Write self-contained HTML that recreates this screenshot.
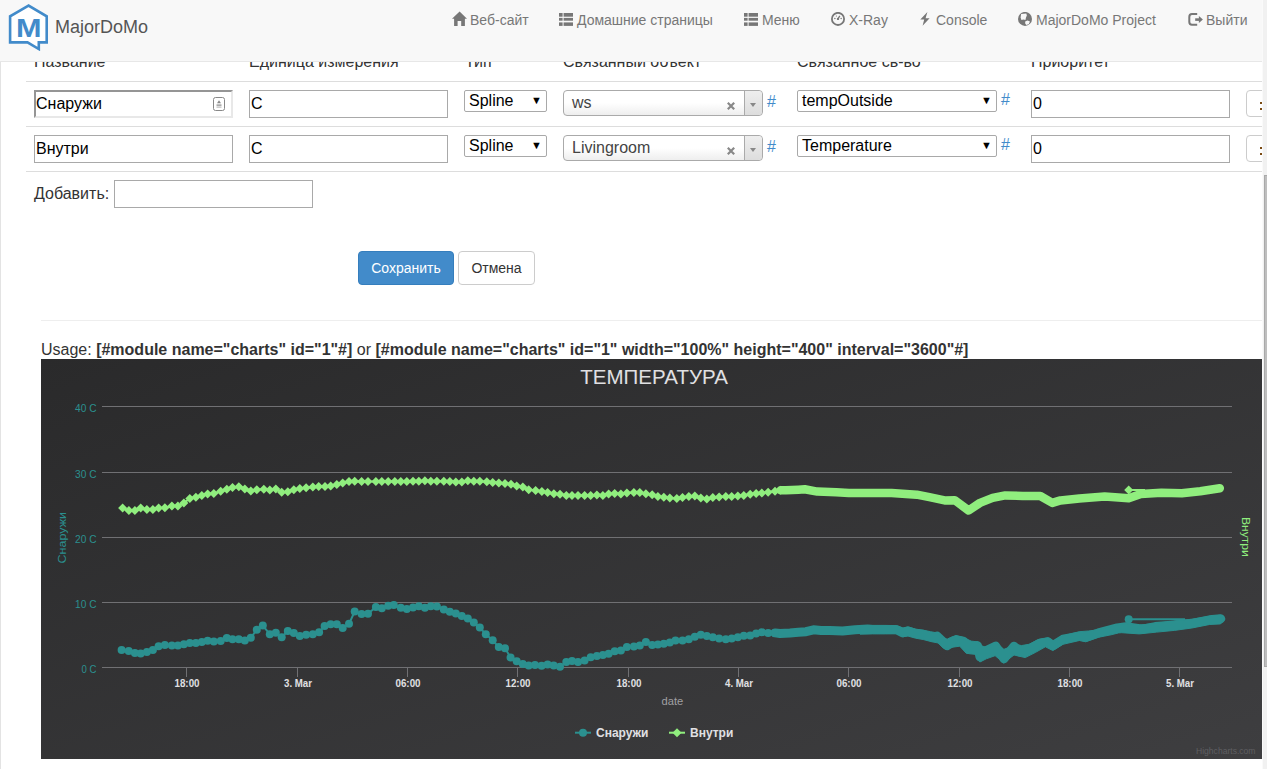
<!DOCTYPE html>
<html><head><meta charset="utf-8"><title>MajorDoMo</title>
<style>
*{box-sizing:border-box}
html,body{margin:0;padding:0;width:1267px;height:769px;overflow:hidden;background:#fff}
body{font-family:"Liberation Sans",sans-serif;color:#333;position:relative}
.a{position:absolute}
.leftline{left:0;top:62px;width:1px;height:707px;background:#e3e3e3}
.hdr{font-size:16px;color:#333;white-space:nowrap;line-height:18px}
.hr{height:1px;background:#ddd}
.inp{background:#fff;border:1px solid #a9a9a9;font-size:16px;color:#000;line-height:26px;padding-left:1px;white-space:nowrap;overflow:hidden}
.sel{background:#fff;border:1px solid #a9a9a9;border-radius:2px;font-size:16px;color:#000;line-height:19px;padding-left:4px;white-space:nowrap}
.sel .arr{position:absolute;right:4px;top:0;font-size:11px;line-height:19px;color:#000}
.s2{border:1px solid #aaa;border-radius:4px;background:linear-gradient(#fff 0%,#fff 50%,#eee 100%);font-size:16px;color:#444;line-height:24px;padding-left:8px;white-space:nowrap}
.s2 .x{position:absolute;left:163px;top:11px;width:8px;height:8px}
.s2 .dd{position:absolute;right:0;top:0;width:18px;height:24px;border-left:1px solid #aaa;border-radius:0 4px 4px 0;background:linear-gradient(#eee,#ddd)}
.s2 .dd:after{content:"";position:absolute;left:5px;top:12px;border-left:3.2px solid transparent;border-right:3.2px solid transparent;border-top:4.6px solid #888}
.hash{font-size:16px;color:#428bca;line-height:18px}
.btnr{border:1px solid #ccc;border-radius:4px;background:#fff}
.nav{top:0;left:0;width:1267px;height:62px;background:#f8f8f8;border-bottom:1px solid #e7e7e7}
.ni{font-size:14px;color:#777;line-height:16px;white-space:nowrap;top:12px}
.ni svg{position:absolute}
</style></head>
<body>
<div class="a leftline"></div>

<!-- table header (partially hidden under navbar) -->
<div class="a hdr" style="left:34px;top:53px">Название</div>
<div class="a hdr" style="left:249px;top:53px">Единица измерения</div>
<div class="a hdr" style="left:465px;top:53px">Тип</div>
<div class="a hdr" style="left:563px;top:53px">Связанный объект</div>
<div class="a hdr" style="left:797px;top:53px">Связанное св-во</div>
<div class="a hdr" style="left:1031px;top:53px">Приоритет</div>

<div class="a hr" style="left:26px;top:81px;width:1236px"></div>
<div class="a hr" style="left:26px;top:126px;width:1236px"></div>
<div class="a hr" style="left:26px;top:171px;width:1236px"></div>

<!-- row 1 -->
<div class="a inp" style="left:34px;top:90px;width:199px;height:28px;border-style:solid;border-width:2px;border-color:#959595 #e8e8e8 #e8e8e8 #959595;padding-left:0;line-height:24px">Снаружи
  <svg class="a" style="left:177px;top:5px" width="12" height="14" viewBox="0 0 12 14"><rect x="0.5" y="0.5" width="11" height="13" rx="2" fill="#fff" stroke="#888"/><path d="M6 3.2L8 6.2H4Z" fill="#888"/><rect x="3.5" y="7.5" width="5" height="1.2" fill="#888"/><rect x="3.5" y="9.5" width="5" height="1.2" fill="#bbb"/></svg>
</div>
<div class="a inp" style="left:249px;top:90px;width:199px;height:28px">C</div>
<div class="a sel" style="left:464px;top:90px;width:83px;height:22px">Spline<span class="arr">▼</span></div>
<div class="a s2" style="left:563px;top:90px;width:200px;height:26px">ws<svg class="x" viewBox="0 0 8 8"><path d="M0.8 0.8L7.2 7.2M7.2 0.8L0.8 7.2" stroke="#888" stroke-width="2.2"/></svg><span class="dd"></span></div>
<div class="a hash" style="left:767px;top:93px">#</div>
<div class="a sel" style="left:797px;top:90px;width:200px;height:22px">tempOutside<span class="arr">▼</span></div>
<div class="a hash" style="left:1001px;top:91px">#</div>
<div class="a inp" style="left:1031px;top:90px;width:199px;height:28px">0</div>
<div class="a btnr" style="left:1246px;top:90px;width:30px;height:27px"></div><div class="a" style="left:1260px;top:102px;width:2px;height:2px;background:#7a4a12"></div><div class="a" style="left:1260px;top:108px;width:2px;height:2px;background:#7a4a12"></div>

<!-- row 2 -->
<div class="a inp" style="left:34px;top:135px;width:199px;height:28px">Внутри</div>
<div class="a inp" style="left:249px;top:135px;width:199px;height:28px">C</div>
<div class="a sel" style="left:464px;top:135px;width:83px;height:22px">Spline<span class="arr">▼</span></div>
<div class="a s2" style="left:563px;top:135px;width:200px;height:26px">Livingroom<svg class="x" viewBox="0 0 8 8"><path d="M0.8 0.8L7.2 7.2M7.2 0.8L0.8 7.2" stroke="#888" stroke-width="2.2"/></svg><span class="dd"></span></div>
<div class="a hash" style="left:767px;top:138px">#</div>
<div class="a sel" style="left:797px;top:135px;width:200px;height:22px">Temperature<span class="arr">▼</span></div>
<div class="a hash" style="left:1001px;top:136px">#</div>
<div class="a inp" style="left:1031px;top:135px;width:199px;height:28px">0</div>
<div class="a btnr" style="left:1246px;top:135px;width:30px;height:27px"></div><div class="a" style="left:1260px;top:147px;width:2px;height:2px;background:#7a4a12"></div><div class="a" style="left:1260px;top:153px;width:2px;height:2px;background:#7a4a12"></div>

<!-- add -->
<div class="a hdr" style="left:34px;top:185px">Добавить:</div>
<div class="a inp" style="left:114px;top:180px;width:199px;height:28px"></div>

<!-- buttons -->
<div class="a" style="left:358px;top:251px;width:96px;height:34px;background:#428bca;border:1px solid #357ebd;border-radius:4px;color:#fff;font-size:14px;line-height:32px;text-align:center">Сохранить</div>
<div class="a" style="left:458px;top:251px;width:77px;height:34px;background:#fff;border:1px solid #ccc;border-radius:4px;color:#333;font-size:14px;line-height:32px;text-align:center">Отмена</div>

<div class="a hr" style="left:41px;top:320px;width:1221px;background:#eee"></div>

<div class="a" style="left:41px;top:341px;font-size:16px;line-height:18px;white-space:nowrap;color:#333">Usage: <b>[#module name="charts" id="1"#]</b> or <b>[#module name="charts" id="1" width="100%" height="400" interval="3600"#]</b></div>

<svg width="1221" height="400" viewBox="41 359 1221 400" style="position:absolute;left:41px;top:359px;display:block">
<defs><linearGradient id="bg" x1="0" y1="0" x2="1" y2="1"><stop offset="0" stop-color="#2a2a2b"/><stop offset="1" stop-color="#3e3e40"/></linearGradient></defs>
<rect x="41" y="359" width="1221" height="400" fill="url(#bg)"/>
<rect x="102" y="406" width="1130" height="1" fill="#707073"/>
<rect x="102" y="472" width="1130" height="1" fill="#707073"/>
<rect x="102" y="537" width="1130" height="1" fill="#707073"/>
<rect x="102" y="602" width="1130" height="1" fill="#707073"/>
<rect x="102" y="667" width="1130" height="1" fill="#707073"/>
<rect x="186" y="667" width="1" height="10" fill="#707073"/>
<rect x="297" y="667" width="1" height="10" fill="#707073"/>
<rect x="407" y="667" width="1" height="10" fill="#707073"/>
<rect x="517" y="667" width="1" height="10" fill="#707073"/>
<rect x="628" y="667" width="1" height="10" fill="#707073"/>
<rect x="738" y="667" width="1" height="10" fill="#707073"/>
<rect x="848" y="667" width="1" height="10" fill="#707073"/>
<rect x="959" y="667" width="1" height="10" fill="#707073"/>
<rect x="1069" y="667" width="1" height="10" fill="#707073"/>
<rect x="1179" y="667" width="1" height="10" fill="#707073"/>
<text x="75.0" y="412.0" textLength="21.5" lengthAdjust="spacingAndGlyphs" font-family="Liberation Sans, sans-serif" font-size="11" fill="#2b908f">40 C</text>
<text x="75.0" y="478.0" textLength="21.5" lengthAdjust="spacingAndGlyphs" font-family="Liberation Sans, sans-serif" font-size="11" fill="#2b908f">30 C</text>
<text x="75.0" y="543.0" textLength="21.5" lengthAdjust="spacingAndGlyphs" font-family="Liberation Sans, sans-serif" font-size="11" fill="#2b908f">20 C</text>
<text x="75.0" y="608.0" textLength="21.5" lengthAdjust="spacingAndGlyphs" font-family="Liberation Sans, sans-serif" font-size="11" fill="#2b908f">10 C</text>
<text x="81.5" y="673.0" textLength="15" lengthAdjust="spacingAndGlyphs" font-family="Liberation Sans, sans-serif" font-size="11" fill="#2b908f">0 C</text>
<text x="174.5" y="686.6" textLength="25" lengthAdjust="spacingAndGlyphs" font-family="Liberation Sans, sans-serif" font-size="10" font-weight="bold" fill="#e0e0e3">18:00</text>
<text x="284.0" y="686.6" textLength="28" lengthAdjust="spacingAndGlyphs" font-family="Liberation Sans, sans-serif" font-size="10" font-weight="bold" fill="#e0e0e3">3. Mar</text>
<text x="395.5" y="686.6" textLength="25" lengthAdjust="spacingAndGlyphs" font-family="Liberation Sans, sans-serif" font-size="10" font-weight="bold" fill="#e0e0e3">06:00</text>
<text x="505.5" y="686.6" textLength="25" lengthAdjust="spacingAndGlyphs" font-family="Liberation Sans, sans-serif" font-size="10" font-weight="bold" fill="#e0e0e3">12:00</text>
<text x="616.5" y="686.6" textLength="25" lengthAdjust="spacingAndGlyphs" font-family="Liberation Sans, sans-serif" font-size="10" font-weight="bold" fill="#e0e0e3">18:00</text>
<text x="725.0" y="686.6" textLength="28" lengthAdjust="spacingAndGlyphs" font-family="Liberation Sans, sans-serif" font-size="10" font-weight="bold" fill="#e0e0e3">4. Mar</text>
<text x="836.5" y="686.6" textLength="25" lengthAdjust="spacingAndGlyphs" font-family="Liberation Sans, sans-serif" font-size="10" font-weight="bold" fill="#e0e0e3">06:00</text>
<text x="947.5" y="686.6" textLength="25" lengthAdjust="spacingAndGlyphs" font-family="Liberation Sans, sans-serif" font-size="10" font-weight="bold" fill="#e0e0e3">12:00</text>
<text x="1057.5" y="686.6" textLength="25" lengthAdjust="spacingAndGlyphs" font-family="Liberation Sans, sans-serif" font-size="10" font-weight="bold" fill="#e0e0e3">18:00</text>
<text x="1166.0" y="686.6" textLength="28" lengthAdjust="spacingAndGlyphs" font-family="Liberation Sans, sans-serif" font-size="10" font-weight="bold" fill="#e0e0e3">5. Mar</text>
<text x="580.3" y="384.2" textLength="147.7" lengthAdjust="spacingAndGlyphs" font-family="Liberation Sans, sans-serif" font-size="20.8" fill="#e0e0e3">ТЕМПЕРАТУРА</text>
<text x="661.5" y="705" textLength="21.7" lengthAdjust="spacingAndGlyphs" font-family="Liberation Sans, sans-serif" font-size="11.5" fill="#a0a0a3">date</text>
<text transform="translate(65.5,537.7) rotate(-90)" x="-25.75" textLength="51.5" lengthAdjust="spacingAndGlyphs" font-family="Liberation Sans, sans-serif" font-size="11.5" fill="#2b908f">Снаружи</text>
<text transform="translate(1242,536.9) rotate(90)" x="-20" textLength="40" lengthAdjust="spacingAndGlyphs" font-family="Liberation Sans, sans-serif" font-size="11.5" fill="#90ee7e">Внутри</text>
<polyline points="775.0,632.9 780.0,633.5 790.0,633.0 798.4,632.3 806.0,631.7 813.5,629.8 821.1,630.4 830.0,630.4 842.6,631.0 855.2,629.8 867.8,629.1 872.6,629.4 885.3,629.4 896.6,629.8 902.9,632.9 908.0,631.0 915.6,633.6 923.1,634.2 932.0,637.3 937.0,636.1 947.1,645.6 956.0,639.9 963.5,641.1 968.6,649.3 977.4,645.6 980.0,657.0 986.3,650.6 995.7,646.2 1004.0,658.8 1014.0,646.2 1019.0,651.9 1025.2,651.9 1039.0,643.7 1047.9,641.8 1052.9,645.6 1063.0,639.2 1079.4,636.1 1085.8,637.3 1098.4,632.9 1117.3,627.9 1126.2,626.6 1142.6,629.1 1155.2,626.6 1174.4,625.1 1191.9,623.3 1209.5,619.8 1220.6,618.7" fill="none" stroke="#2b908f" stroke-width="9" stroke-linejoin="round" stroke-linecap="round"/>
<polygon points="860.0,625.7 872.6,625.4 885.3,625.4 896.6,625.6 902.9,627.9 908.0,626.9 915.6,629.1 923.1,630.2 930.7,631.7 937.0,632.9 942.1,637.3 947.1,639.2 950.9,637.3 956.0,635.5 961.0,636.7 964.8,638.0 971.1,641.1 977.4,641.8 981.2,645.6 986.3,647.4 992.6,644.3 995.7,642.8 1000.2,646.2 1003.9,649.3 1009.0,647.4 1014.0,643.7 1021.4,645.6 1028.9,644.3 1039.0,639.2 1047.9,637.7 1053.6,641.1 1063.0,636.1 1069.3,634.2 1079.4,631.7 1088.3,631.0 1098.4,629.8 1117.3,625.6 1121.7,624.5 1139.3,625.1 1156.8,623.3 1174.4,621.0 1191.9,619.3 1209.5,616.3 1220.6,615.2 1224.7,618.1 1224.7,619.8 1220.6,623.9 1209.5,624.5 1191.9,628.0 1174.4,630.4 1156.8,632.1 1139.3,633.9 1121.7,632.7 1118.6,632.9 1111.0,634.8 1098.4,637.3 1085.8,641.8 1079.4,640.5 1063.0,644.3 1052.9,650.6 1045.4,646.8 1035.3,652.5 1025.2,657.6 1014.0,655.0 1009.0,658.8 1003.9,663.2 998.9,658.8 995.1,655.7 986.3,658.8 979.9,662.0 976.2,654.4 969.8,653.8 966.1,653.1 959.7,646.2 950.9,647.4 947.1,649.3 943.3,648.1 938.3,643.0 932.0,641.8 923.1,639.5 915.6,638.2 908.0,636.1 902.9,636.7 896.6,633.6 885.3,633.9 872.6,633.9 860.0,634.2" fill="#2b908f" stroke="#2b908f" stroke-width="1" stroke-linejoin="round"/>
<polyline points="121.6,650.0 128.7,651.0 134.9,653.1 140.7,653.4 146.9,651.9 152.9,650.0 158.6,646.2 164.9,645.0 171.9,645.6 177.9,645.6 183.9,644.3 189.8,643.0 195.9,643.0 201.8,642.0 207.6,640.8 213.8,641.5 220.7,640.9 226.8,638.0 232.5,639.2 238.8,639.2 244.8,640.5 250.8,637.7 256.8,629.8 262.8,625.6 269.8,634.2 275.8,632.7 281.7,637.3 287.8,631.0 293.8,632.9 299.8,636.1 306.1,634.8 312.8,634.2 319.1,632.3 324.6,626.0 330.7,624.3 336.8,624.3 342.7,628.1 349.0,623.8 354.7,611.5 361.6,614.0 368.0,613.7 375.9,607.0 381.8,608.3 388.2,605.8 393.8,604.9 400.8,607.7 406.8,608.9 413.0,607.4 418.8,606.2 424.9,607.7 430.8,606.2 436.9,606.4 443.8,609.6 449.8,611.7 455.8,613.4 461.8,615.9 467.8,618.4 473.8,622.6 479.8,627.6 485.8,634.2 492.7,640.3 498.8,647.1 505.0,648.3 510.6,657.5 516.7,661.3 522.8,663.9 528.7,665.5 535.0,665.1 541.6,665.8 547.6,664.5 553.7,665.5 560.0,666.8 566.3,662.0 572.0,661.0 578.0,662.0 584.6,660.5 590.7,657.2 596.9,655.9 602.9,655.0 608.6,653.8 614.7,651.2 620.9,650.4 626.9,647.1 633.9,646.6 639.8,645.6 645.9,642.0 652.2,644.9 657.9,644.5 663.8,643.7 669.8,642.4 675.5,640.5 682.5,640.5 688.8,639.2 694.8,636.7 700.8,634.8 706.8,636.1 712.8,637.3 719.1,638.6 725.8,639.2 731.7,638.6 737.8,637.3 743.8,635.7 750.2,635.5 756.1,633.6 761.8,632.3 768.1,632.9 775.0,632.9" fill="none" stroke="#2b908f" stroke-width="2" stroke-linejoin="round"/>
<circle cx="121.6" cy="650.0" r="4" fill="#2b908f"/>
<circle cx="128.7" cy="651.0" r="4" fill="#2b908f"/>
<circle cx="134.9" cy="653.1" r="4" fill="#2b908f"/>
<circle cx="140.7" cy="653.4" r="4" fill="#2b908f"/>
<circle cx="146.9" cy="651.9" r="4" fill="#2b908f"/>
<circle cx="152.9" cy="650.0" r="4" fill="#2b908f"/>
<circle cx="158.6" cy="646.2" r="4" fill="#2b908f"/>
<circle cx="164.9" cy="645.0" r="4" fill="#2b908f"/>
<circle cx="171.9" cy="645.6" r="4" fill="#2b908f"/>
<circle cx="177.9" cy="645.6" r="4" fill="#2b908f"/>
<circle cx="183.9" cy="644.3" r="4" fill="#2b908f"/>
<circle cx="189.8" cy="643.0" r="4" fill="#2b908f"/>
<circle cx="195.9" cy="643.0" r="4" fill="#2b908f"/>
<circle cx="201.8" cy="642.0" r="4" fill="#2b908f"/>
<circle cx="207.6" cy="640.8" r="4" fill="#2b908f"/>
<circle cx="213.8" cy="641.5" r="4" fill="#2b908f"/>
<circle cx="220.7" cy="640.9" r="4" fill="#2b908f"/>
<circle cx="226.8" cy="638.0" r="4" fill="#2b908f"/>
<circle cx="232.5" cy="639.2" r="4" fill="#2b908f"/>
<circle cx="238.8" cy="639.2" r="4" fill="#2b908f"/>
<circle cx="244.8" cy="640.5" r="4" fill="#2b908f"/>
<circle cx="250.8" cy="637.7" r="4" fill="#2b908f"/>
<circle cx="256.8" cy="629.8" r="4" fill="#2b908f"/>
<circle cx="262.8" cy="625.6" r="4" fill="#2b908f"/>
<circle cx="269.8" cy="634.2" r="4" fill="#2b908f"/>
<circle cx="275.8" cy="632.7" r="4" fill="#2b908f"/>
<circle cx="281.7" cy="637.3" r="4" fill="#2b908f"/>
<circle cx="287.8" cy="631.0" r="4" fill="#2b908f"/>
<circle cx="293.8" cy="632.9" r="4" fill="#2b908f"/>
<circle cx="299.8" cy="636.1" r="4" fill="#2b908f"/>
<circle cx="306.1" cy="634.8" r="4" fill="#2b908f"/>
<circle cx="312.8" cy="634.2" r="4" fill="#2b908f"/>
<circle cx="319.1" cy="632.3" r="4" fill="#2b908f"/>
<circle cx="324.6" cy="626.0" r="4" fill="#2b908f"/>
<circle cx="330.7" cy="624.3" r="4" fill="#2b908f"/>
<circle cx="336.8" cy="624.3" r="4" fill="#2b908f"/>
<circle cx="342.7" cy="628.1" r="4" fill="#2b908f"/>
<circle cx="349.0" cy="623.8" r="4" fill="#2b908f"/>
<circle cx="354.7" cy="611.5" r="4" fill="#2b908f"/>
<circle cx="361.6" cy="614.0" r="4" fill="#2b908f"/>
<circle cx="368.0" cy="613.7" r="4" fill="#2b908f"/>
<circle cx="375.9" cy="607.0" r="4" fill="#2b908f"/>
<circle cx="381.8" cy="608.3" r="4" fill="#2b908f"/>
<circle cx="388.2" cy="605.8" r="4" fill="#2b908f"/>
<circle cx="393.8" cy="604.9" r="4" fill="#2b908f"/>
<circle cx="400.8" cy="607.7" r="4" fill="#2b908f"/>
<circle cx="406.8" cy="608.9" r="4" fill="#2b908f"/>
<circle cx="413.0" cy="607.4" r="4" fill="#2b908f"/>
<circle cx="418.8" cy="606.2" r="4" fill="#2b908f"/>
<circle cx="424.9" cy="607.7" r="4" fill="#2b908f"/>
<circle cx="430.8" cy="606.2" r="4" fill="#2b908f"/>
<circle cx="436.9" cy="606.4" r="4" fill="#2b908f"/>
<circle cx="443.8" cy="609.6" r="4" fill="#2b908f"/>
<circle cx="449.8" cy="611.7" r="4" fill="#2b908f"/>
<circle cx="455.8" cy="613.4" r="4" fill="#2b908f"/>
<circle cx="461.8" cy="615.9" r="4" fill="#2b908f"/>
<circle cx="467.8" cy="618.4" r="4" fill="#2b908f"/>
<circle cx="473.8" cy="622.6" r="4" fill="#2b908f"/>
<circle cx="479.8" cy="627.6" r="4" fill="#2b908f"/>
<circle cx="485.8" cy="634.2" r="4" fill="#2b908f"/>
<circle cx="492.7" cy="640.3" r="4" fill="#2b908f"/>
<circle cx="498.8" cy="647.1" r="4" fill="#2b908f"/>
<circle cx="505.0" cy="648.3" r="4" fill="#2b908f"/>
<circle cx="510.6" cy="657.5" r="4" fill="#2b908f"/>
<circle cx="516.7" cy="661.3" r="4" fill="#2b908f"/>
<circle cx="522.8" cy="663.9" r="4" fill="#2b908f"/>
<circle cx="528.7" cy="665.5" r="4" fill="#2b908f"/>
<circle cx="535.0" cy="665.1" r="4" fill="#2b908f"/>
<circle cx="541.6" cy="665.8" r="4" fill="#2b908f"/>
<circle cx="547.6" cy="664.5" r="4" fill="#2b908f"/>
<circle cx="553.7" cy="665.5" r="4" fill="#2b908f"/>
<circle cx="560.0" cy="666.8" r="4" fill="#2b908f"/>
<circle cx="566.3" cy="662.0" r="4" fill="#2b908f"/>
<circle cx="572.0" cy="661.0" r="4" fill="#2b908f"/>
<circle cx="578.0" cy="662.0" r="4" fill="#2b908f"/>
<circle cx="584.6" cy="660.5" r="4" fill="#2b908f"/>
<circle cx="590.7" cy="657.2" r="4" fill="#2b908f"/>
<circle cx="596.9" cy="655.9" r="4" fill="#2b908f"/>
<circle cx="602.9" cy="655.0" r="4" fill="#2b908f"/>
<circle cx="608.6" cy="653.8" r="4" fill="#2b908f"/>
<circle cx="614.7" cy="651.2" r="4" fill="#2b908f"/>
<circle cx="620.9" cy="650.4" r="4" fill="#2b908f"/>
<circle cx="626.9" cy="647.1" r="4" fill="#2b908f"/>
<circle cx="633.9" cy="646.6" r="4" fill="#2b908f"/>
<circle cx="639.8" cy="645.6" r="4" fill="#2b908f"/>
<circle cx="645.9" cy="642.0" r="4" fill="#2b908f"/>
<circle cx="652.2" cy="644.9" r="4" fill="#2b908f"/>
<circle cx="657.9" cy="644.5" r="4" fill="#2b908f"/>
<circle cx="663.8" cy="643.7" r="4" fill="#2b908f"/>
<circle cx="669.8" cy="642.4" r="4" fill="#2b908f"/>
<circle cx="675.5" cy="640.5" r="4" fill="#2b908f"/>
<circle cx="682.5" cy="640.5" r="4" fill="#2b908f"/>
<circle cx="688.8" cy="639.2" r="4" fill="#2b908f"/>
<circle cx="694.8" cy="636.7" r="4" fill="#2b908f"/>
<circle cx="700.8" cy="634.8" r="4" fill="#2b908f"/>
<circle cx="706.8" cy="636.1" r="4" fill="#2b908f"/>
<circle cx="712.8" cy="637.3" r="4" fill="#2b908f"/>
<circle cx="719.1" cy="638.6" r="4" fill="#2b908f"/>
<circle cx="725.8" cy="639.2" r="4" fill="#2b908f"/>
<circle cx="731.7" cy="638.6" r="4" fill="#2b908f"/>
<circle cx="737.8" cy="637.3" r="4" fill="#2b908f"/>
<circle cx="743.8" cy="635.7" r="4" fill="#2b908f"/>
<circle cx="750.2" cy="635.5" r="4" fill="#2b908f"/>
<circle cx="756.1" cy="633.6" r="4" fill="#2b908f"/>
<circle cx="761.8" cy="632.3" r="4" fill="#2b908f"/>
<circle cx="768.1" cy="632.9" r="4" fill="#2b908f"/>
<circle cx="775.0" cy="632.9" r="4" fill="#2b908f"/>
<polyline points="1128.7,619.3 1185,619.3" fill="none" stroke="#2b908f" stroke-width="2"/>
<circle cx="1128.7" cy="619.3" r="4" fill="#2b908f"/>
<polyline points="780.7,490.3 785.8,490.3 798.4,489.7 804.7,489.3 817.3,491.6 836.3,492.2 848.9,493.1 870.0,493.1 891.6,493.1 916.8,494.7 929.4,497.2 944.6,500.4 954.7,500.2 968.6,510.5 980.0,502.9 992.6,497.9 1005.2,495.4 1022.6,496.0 1040.3,496.0 1052.3,502.9 1060.5,500.4 1079.4,498.5 1104.7,496.6 1128.7,498.2 1140.8,493.9 1161.3,492.8 1181.8,493.3 1200.3,491.3 1219.8,488.2" fill="none" stroke="#90ee7e" stroke-width="8.5" stroke-linejoin="round" stroke-linecap="round"/>
<polyline points="122.6,508.0 128.9,510.5 134.9,510.5 140.7,508.0 146.9,509.6 152.9,509.6 158.6,508.0 164.9,507.7 171.9,506.1 177.9,506.1 183.9,502.9 189.8,498.5 195.9,497.2 201.8,495.4 207.6,494.1 213.8,493.5 220.7,491.3 226.8,489.3 232.5,487.5 238.8,486.8 244.8,489.0 250.8,490.9 256.8,489.7 263.8,489.2 269.8,490.0 275.8,489.0 281.7,492.2 287.8,491.8 293.8,489.7 299.8,488.4 306.1,487.8 312.8,487.1 318.7,486.5 325.0,486.5 330.7,485.9 336.8,484.6 342.7,483.0 349.0,481.5 354.7,481.2 361.6,481.5 368.0,481.5 375.9,481.5 381.8,481.5 388.2,481.5 394.8,481.5 400.8,481.5 406.8,481.5 413.0,481.3 418.8,481.2 424.9,480.8 430.8,481.2 436.9,481.2 443.8,481.2 449.8,481.5 455.8,482.1 461.8,482.1 467.8,480.8 473.8,481.2 479.8,481.2 486.8,481.7 492.7,482.5 498.8,483.0 505.0,483.4 511.0,484.2 516.7,485.9 522.8,487.1 528.7,489.7 535.6,490.6 541.9,491.6 547.6,492.6 553.9,493.8 560.0,494.3 566.3,495.4 572.0,495.4 578.0,495.6 584.6,495.6 590.7,495.6 596.9,495.1 602.9,495.4 608.6,494.1 614.7,493.5 620.9,494.1 626.9,493.1 633.9,492.6 639.8,492.6 645.9,493.8 652.2,494.7 657.9,496.6 663.8,497.2 669.8,498.1 676.8,498.5 682.5,497.6 688.8,496.6 694.8,496.0 700.8,497.9 706.8,499.1 712.8,497.6 719.1,496.9 725.8,496.6 731.7,496.4 737.8,496.0 743.8,495.6 750.2,494.3 756.1,493.5 761.8,493.1 768.1,492.2 775.0,491.3 780.7,490.3" fill="none" stroke="#90ee7e" stroke-width="2" stroke-linejoin="round"/>
<path d="M122.6 503.5L127.1 508.0L122.6 512.5L118.1 508.0Z" fill="#90ee7e"/>
<path d="M128.9 506.0L133.4 510.5L128.9 515.0L124.4 510.5Z" fill="#90ee7e"/>
<path d="M134.9 506.0L139.4 510.5L134.9 515.0L130.4 510.5Z" fill="#90ee7e"/>
<path d="M140.7 503.5L145.2 508.0L140.7 512.5L136.2 508.0Z" fill="#90ee7e"/>
<path d="M146.9 505.1L151.4 509.6L146.9 514.1L142.4 509.6Z" fill="#90ee7e"/>
<path d="M152.9 505.1L157.4 509.6L152.9 514.1L148.4 509.6Z" fill="#90ee7e"/>
<path d="M158.6 503.5L163.1 508.0L158.6 512.5L154.1 508.0Z" fill="#90ee7e"/>
<path d="M164.9 503.2L169.4 507.7L164.9 512.2L160.4 507.7Z" fill="#90ee7e"/>
<path d="M171.9 501.6L176.4 506.1L171.9 510.6L167.4 506.1Z" fill="#90ee7e"/>
<path d="M177.9 501.6L182.4 506.1L177.9 510.6L173.4 506.1Z" fill="#90ee7e"/>
<path d="M183.9 498.4L188.4 502.9L183.9 507.4L179.4 502.9Z" fill="#90ee7e"/>
<path d="M189.8 494.0L194.3 498.5L189.8 503.0L185.3 498.5Z" fill="#90ee7e"/>
<path d="M195.9 492.7L200.4 497.2L195.9 501.7L191.4 497.2Z" fill="#90ee7e"/>
<path d="M201.8 490.9L206.3 495.4L201.8 499.9L197.3 495.4Z" fill="#90ee7e"/>
<path d="M207.6 489.6L212.1 494.1L207.6 498.6L203.1 494.1Z" fill="#90ee7e"/>
<path d="M213.8 489.0L218.3 493.5L213.8 498.0L209.3 493.5Z" fill="#90ee7e"/>
<path d="M220.7 486.8L225.2 491.3L220.7 495.8L216.2 491.3Z" fill="#90ee7e"/>
<path d="M226.8 484.8L231.3 489.3L226.8 493.8L222.3 489.3Z" fill="#90ee7e"/>
<path d="M232.5 483.0L237.0 487.5L232.5 492.0L228.0 487.5Z" fill="#90ee7e"/>
<path d="M238.8 482.3L243.3 486.8L238.8 491.3L234.3 486.8Z" fill="#90ee7e"/>
<path d="M244.8 484.5L249.3 489.0L244.8 493.5L240.3 489.0Z" fill="#90ee7e"/>
<path d="M250.8 486.4L255.3 490.9L250.8 495.4L246.3 490.9Z" fill="#90ee7e"/>
<path d="M256.8 485.2L261.3 489.7L256.8 494.2L252.3 489.7Z" fill="#90ee7e"/>
<path d="M263.8 484.7L268.3 489.2L263.8 493.7L259.3 489.2Z" fill="#90ee7e"/>
<path d="M269.8 485.5L274.3 490.0L269.8 494.5L265.3 490.0Z" fill="#90ee7e"/>
<path d="M275.8 484.5L280.3 489.0L275.8 493.5L271.3 489.0Z" fill="#90ee7e"/>
<path d="M281.7 487.7L286.2 492.2L281.7 496.7L277.2 492.2Z" fill="#90ee7e"/>
<path d="M287.8 487.3L292.3 491.8L287.8 496.3L283.3 491.8Z" fill="#90ee7e"/>
<path d="M293.8 485.2L298.3 489.7L293.8 494.2L289.3 489.7Z" fill="#90ee7e"/>
<path d="M299.8 483.9L304.3 488.4L299.8 492.9L295.3 488.4Z" fill="#90ee7e"/>
<path d="M306.1 483.3L310.6 487.8L306.1 492.3L301.6 487.8Z" fill="#90ee7e"/>
<path d="M312.8 482.6L317.3 487.1L312.8 491.6L308.3 487.1Z" fill="#90ee7e"/>
<path d="M318.7 482.0L323.2 486.5L318.7 491.0L314.2 486.5Z" fill="#90ee7e"/>
<path d="M325.0 482.0L329.5 486.5L325.0 491.0L320.5 486.5Z" fill="#90ee7e"/>
<path d="M330.7 481.4L335.2 485.9L330.7 490.4L326.2 485.9Z" fill="#90ee7e"/>
<path d="M336.8 480.1L341.3 484.6L336.8 489.1L332.3 484.6Z" fill="#90ee7e"/>
<path d="M342.7 478.5L347.2 483.0L342.7 487.5L338.2 483.0Z" fill="#90ee7e"/>
<path d="M349.0 477.0L353.5 481.5L349.0 486.0L344.5 481.5Z" fill="#90ee7e"/>
<path d="M354.7 476.7L359.2 481.2L354.7 485.7L350.2 481.2Z" fill="#90ee7e"/>
<path d="M361.6 477.0L366.1 481.5L361.6 486.0L357.1 481.5Z" fill="#90ee7e"/>
<path d="M368.0 477.0L372.5 481.5L368.0 486.0L363.5 481.5Z" fill="#90ee7e"/>
<path d="M375.9 477.0L380.4 481.5L375.9 486.0L371.4 481.5Z" fill="#90ee7e"/>
<path d="M381.8 477.0L386.3 481.5L381.8 486.0L377.3 481.5Z" fill="#90ee7e"/>
<path d="M388.2 477.0L392.7 481.5L388.2 486.0L383.7 481.5Z" fill="#90ee7e"/>
<path d="M394.8 477.0L399.3 481.5L394.8 486.0L390.3 481.5Z" fill="#90ee7e"/>
<path d="M400.8 477.0L405.3 481.5L400.8 486.0L396.3 481.5Z" fill="#90ee7e"/>
<path d="M406.8 477.0L411.3 481.5L406.8 486.0L402.3 481.5Z" fill="#90ee7e"/>
<path d="M413.0 476.8L417.5 481.3L413.0 485.8L408.5 481.3Z" fill="#90ee7e"/>
<path d="M418.8 476.7L423.3 481.2L418.8 485.7L414.3 481.2Z" fill="#90ee7e"/>
<path d="M424.9 476.3L429.4 480.8L424.9 485.3L420.4 480.8Z" fill="#90ee7e"/>
<path d="M430.8 476.7L435.3 481.2L430.8 485.7L426.3 481.2Z" fill="#90ee7e"/>
<path d="M436.9 476.7L441.4 481.2L436.9 485.7L432.4 481.2Z" fill="#90ee7e"/>
<path d="M443.8 476.7L448.3 481.2L443.8 485.7L439.3 481.2Z" fill="#90ee7e"/>
<path d="M449.8 477.0L454.3 481.5L449.8 486.0L445.3 481.5Z" fill="#90ee7e"/>
<path d="M455.8 477.6L460.3 482.1L455.8 486.6L451.3 482.1Z" fill="#90ee7e"/>
<path d="M461.8 477.6L466.3 482.1L461.8 486.6L457.3 482.1Z" fill="#90ee7e"/>
<path d="M467.8 476.3L472.3 480.8L467.8 485.3L463.3 480.8Z" fill="#90ee7e"/>
<path d="M473.8 476.7L478.3 481.2L473.8 485.7L469.3 481.2Z" fill="#90ee7e"/>
<path d="M479.8 476.7L484.3 481.2L479.8 485.7L475.3 481.2Z" fill="#90ee7e"/>
<path d="M486.8 477.2L491.3 481.7L486.8 486.2L482.3 481.7Z" fill="#90ee7e"/>
<path d="M492.7 478.0L497.2 482.5L492.7 487.0L488.2 482.5Z" fill="#90ee7e"/>
<path d="M498.8 478.5L503.3 483.0L498.8 487.5L494.3 483.0Z" fill="#90ee7e"/>
<path d="M505.0 478.9L509.5 483.4L505.0 487.9L500.5 483.4Z" fill="#90ee7e"/>
<path d="M511.0 479.7L515.5 484.2L511.0 488.7L506.5 484.2Z" fill="#90ee7e"/>
<path d="M516.7 481.4L521.2 485.9L516.7 490.4L512.2 485.9Z" fill="#90ee7e"/>
<path d="M522.8 482.6L527.3 487.1L522.8 491.6L518.3 487.1Z" fill="#90ee7e"/>
<path d="M528.7 485.2L533.2 489.7L528.7 494.2L524.2 489.7Z" fill="#90ee7e"/>
<path d="M535.6 486.1L540.1 490.6L535.6 495.1L531.1 490.6Z" fill="#90ee7e"/>
<path d="M541.9 487.1L546.4 491.6L541.9 496.1L537.4 491.6Z" fill="#90ee7e"/>
<path d="M547.6 488.1L552.1 492.6L547.6 497.1L543.1 492.6Z" fill="#90ee7e"/>
<path d="M553.9 489.3L558.4 493.8L553.9 498.3L549.4 493.8Z" fill="#90ee7e"/>
<path d="M560.0 489.8L564.5 494.3L560.0 498.8L555.5 494.3Z" fill="#90ee7e"/>
<path d="M566.3 490.9L570.8 495.4L566.3 499.9L561.8 495.4Z" fill="#90ee7e"/>
<path d="M572.0 490.9L576.5 495.4L572.0 499.9L567.5 495.4Z" fill="#90ee7e"/>
<path d="M578.0 491.1L582.5 495.6L578.0 500.1L573.5 495.6Z" fill="#90ee7e"/>
<path d="M584.6 491.1L589.1 495.6L584.6 500.1L580.1 495.6Z" fill="#90ee7e"/>
<path d="M590.7 491.1L595.2 495.6L590.7 500.1L586.2 495.6Z" fill="#90ee7e"/>
<path d="M596.9 490.6L601.4 495.1L596.9 499.6L592.4 495.1Z" fill="#90ee7e"/>
<path d="M602.9 490.9L607.4 495.4L602.9 499.9L598.4 495.4Z" fill="#90ee7e"/>
<path d="M608.6 489.6L613.1 494.1L608.6 498.6L604.1 494.1Z" fill="#90ee7e"/>
<path d="M614.7 489.0L619.2 493.5L614.7 498.0L610.2 493.5Z" fill="#90ee7e"/>
<path d="M620.9 489.6L625.4 494.1L620.9 498.6L616.4 494.1Z" fill="#90ee7e"/>
<path d="M626.9 488.6L631.4 493.1L626.9 497.6L622.4 493.1Z" fill="#90ee7e"/>
<path d="M633.9 488.1L638.4 492.6L633.9 497.1L629.4 492.6Z" fill="#90ee7e"/>
<path d="M639.8 488.1L644.3 492.6L639.8 497.1L635.3 492.6Z" fill="#90ee7e"/>
<path d="M645.9 489.3L650.4 493.8L645.9 498.3L641.4 493.8Z" fill="#90ee7e"/>
<path d="M652.2 490.2L656.7 494.7L652.2 499.2L647.7 494.7Z" fill="#90ee7e"/>
<path d="M657.9 492.1L662.4 496.6L657.9 501.1L653.4 496.6Z" fill="#90ee7e"/>
<path d="M663.8 492.7L668.3 497.2L663.8 501.7L659.3 497.2Z" fill="#90ee7e"/>
<path d="M669.8 493.6L674.3 498.1L669.8 502.6L665.3 498.1Z" fill="#90ee7e"/>
<path d="M676.8 494.0L681.3 498.5L676.8 503.0L672.3 498.5Z" fill="#90ee7e"/>
<path d="M682.5 493.1L687.0 497.6L682.5 502.1L678.0 497.6Z" fill="#90ee7e"/>
<path d="M688.8 492.1L693.3 496.6L688.8 501.1L684.3 496.6Z" fill="#90ee7e"/>
<path d="M694.8 491.5L699.3 496.0L694.8 500.5L690.3 496.0Z" fill="#90ee7e"/>
<path d="M700.8 493.4L705.3 497.9L700.8 502.4L696.3 497.9Z" fill="#90ee7e"/>
<path d="M706.8 494.6L711.3 499.1L706.8 503.6L702.3 499.1Z" fill="#90ee7e"/>
<path d="M712.8 493.1L717.3 497.6L712.8 502.1L708.3 497.6Z" fill="#90ee7e"/>
<path d="M719.1 492.4L723.6 496.9L719.1 501.4L714.6 496.9Z" fill="#90ee7e"/>
<path d="M725.8 492.1L730.3 496.6L725.8 501.1L721.3 496.6Z" fill="#90ee7e"/>
<path d="M731.7 491.9L736.2 496.4L731.7 500.9L727.2 496.4Z" fill="#90ee7e"/>
<path d="M737.8 491.5L742.3 496.0L737.8 500.5L733.3 496.0Z" fill="#90ee7e"/>
<path d="M743.8 491.1L748.3 495.6L743.8 500.1L739.3 495.6Z" fill="#90ee7e"/>
<path d="M750.2 489.8L754.7 494.3L750.2 498.8L745.7 494.3Z" fill="#90ee7e"/>
<path d="M756.1 489.0L760.6 493.5L756.1 498.0L751.6 493.5Z" fill="#90ee7e"/>
<path d="M761.8 488.6L766.3 493.1L761.8 497.6L757.3 493.1Z" fill="#90ee7e"/>
<path d="M768.1 487.7L772.6 492.2L768.1 496.7L763.6 492.2Z" fill="#90ee7e"/>
<path d="M775.0 486.8L779.5 491.3L775.0 495.8L770.5 491.3Z" fill="#90ee7e"/>
<path d="M780.7 485.8L785.2 490.3L780.7 494.8L776.2 490.3Z" fill="#90ee7e"/>
<polyline points="1128.7,490 1145,490" fill="none" stroke="#90ee7e" stroke-width="2"/>
<path d="M1128.7 485.5L1133.2 490L1128.7 494.5L1124.2 490Z" fill="#90ee7e"/>
<rect x="575" y="731.7" width="16" height="2" fill="#2b908f"/><circle cx="583" cy="732.7" r="4" fill="#2b908f"/>
<text x="596" y="737" font-family="Liberation Sans, sans-serif" font-size="12" font-weight="bold" fill="#e0e0e3">Снаружи</text>
<rect x="669" y="731.7" width="16" height="2" fill="#90ee7e"/><path d="M677 728.2L681.5 732.7L677 737.2L672.5 732.7Z" fill="#90ee7e"/>
<text x="690" y="737" font-family="Liberation Sans, sans-serif" font-size="12" font-weight="bold" fill="#e0e0e3">Внутри</text>
<text x="1196" y="754" textLength="59.5" lengthAdjust="spacingAndGlyphs" font-family="Liberation Sans, sans-serif" font-size="9" fill="#5f5f62">Highcharts.com</text>
</svg>

<!-- navbar -->
<div class="a nav">
  <svg class="a" style="left:5px;top:0" width="50" height="55" viewBox="5 0 50 55">
    <path d="M28.5 5.6L10.1 16.3V42.4H27.5L38.8 49V42.4H46.7V16.3Z" fill="#fff" stroke="#428bca" stroke-width="2.6" stroke-linejoin="miter"/>
    <text x="15.9" y="37" textLength="25.5" lengthAdjust="spacingAndGlyphs" font-family="Liberation Sans" font-weight="bold" font-size="25" fill="#428bca">M</text>
  </svg>
  <div class="a" style="left:55px;top:17px;font-size:18px;line-height:20px;color:#555">MajorDoMo</div>

  <div class="a ni" style="left:452px">
    <svg style="left:0;top:-1px" width="15" height="16" viewBox="0 0 15 16"><path d="M7.6 0.6L0 7.7H2.1V14.9H5.6V9.9H9.2V14.9H12.9V7.7H15Z" fill="#777"/></svg>
    <span style="position:absolute;left:18px;top:0">Веб-сайт</span></div>
  <div class="a ni" style="left:559px">
    <svg style="left:0;top:1px" width="15" height="13" viewBox="0 0 15 13"><rect x="0" y="0" width="3.6" height="3.7" fill="#777"/><rect x="4.6" y="0" width="9.4" height="3.7" fill="#777"/><rect x="0" y="4.9" width="3.6" height="2.8" fill="#777"/><rect x="4.6" y="4.9" width="9.4" height="2.8" fill="#777"/><rect x="0" y="9.4" width="3.6" height="3.5" fill="#777"/><rect x="4.6" y="9.4" width="9.4" height="3.5" fill="#777"/></svg>
    <span style="position:absolute;left:18px;top:0">Домашние страницы</span></div>
  <div class="a ni" style="left:744px">
    <svg style="left:0;top:1px" width="15" height="13" viewBox="0 0 15 13"><rect x="0" y="0" width="3.6" height="3.7" fill="#777"/><rect x="4.6" y="0" width="9.4" height="3.7" fill="#777"/><rect x="0" y="4.9" width="3.6" height="2.8" fill="#777"/><rect x="4.6" y="4.9" width="9.4" height="2.8" fill="#777"/><rect x="0" y="9.4" width="3.6" height="3.5" fill="#777"/><rect x="4.6" y="9.4" width="9.4" height="3.5" fill="#777"/></svg>
    <span style="position:absolute;left:18px;top:0">Меню</span></div>
  <div class="a ni" style="left:831px">
    <svg style="left:0;top:0" width="15" height="15" viewBox="0 0 15 15"><circle cx="7" cy="6.9" r="6.1" fill="none" stroke="#777" stroke-width="1.8"/><path d="M7 6.9L8.8 3.8" stroke="#777" stroke-width="1.3"/><circle cx="7" cy="6.9" r="1.2" fill="#777"/><circle cx="3.9" cy="6.4" r="0.75" fill="#777"/><circle cx="10.1" cy="6.4" r="0.75" fill="#777"/><circle cx="5.4" cy="4" r="0.6" fill="#777"/></svg>
    <span style="position:absolute;left:18px;top:0">X-Ray</span></div>
  <div class="a ni" style="left:920px">
    <svg style="left:0;top:0" width="10" height="14" viewBox="0 0 10 14"><path d="M7.4 0L0.3 7.6H4.2L2.6 13.7L9.6 6.3H5.6Z" fill="#777"/></svg>
    <span style="position:absolute;left:16px;top:0">Console</span></div>
  <div class="a ni" style="left:1018px">
    <svg style="left:0;top:0" width="14" height="14" viewBox="0 0 14 14"><circle cx="7" cy="6.9" r="7" fill="#777"/><path d="M3.15 2L8.3 1.43L8.87 3.44L8 5.44L7.44 8L5.44 7.44L3.44 8L2.58 5.44Z" fill="#f8f8f8"/><path d="M7.16 9.44L9.44 8.59L12 9.44L10.87 12.02L8.3 12.88L7.16 11.45Z" fill="#f8f8f8"/></svg>
    <span style="position:absolute;left:18px;top:0">MajorDoMo Project</span></div>
  <div class="a ni" style="left:1188px">
    <svg style="left:0;top:0" width="16" height="14" viewBox="0 0 16 14"><path d="M9.2 2H4C2.4 2 1.3 3.2 1.3 5V10C1.3 11.7 2.4 12.7 4 12.7H9.2" stroke="#777" stroke-width="2" fill="none"/><rect x="7.2" y="6.3" width="3.8" height="2.6" fill="#777"/><path d="M10.9 4L14.9 7.5L10.9 10.9Z" fill="#777"/></svg>
    <span style="position:absolute;left:18px;top:0">Выйти</span></div>
</div>

<!-- scrollbar -->
<div class="a" style="left:1262px;top:0;width:5px;height:769px;background:#f1f1f1;border-left:1px solid #fafafa"></div>
<div class="a" style="left:1264px;top:175px;width:3px;height:492px;background:#bebebe;border-left:1px solid #a9a9a9;border-top:1px solid #a9a9a9;border-bottom:1px solid #a9a9a9"></div>
</body></html>
